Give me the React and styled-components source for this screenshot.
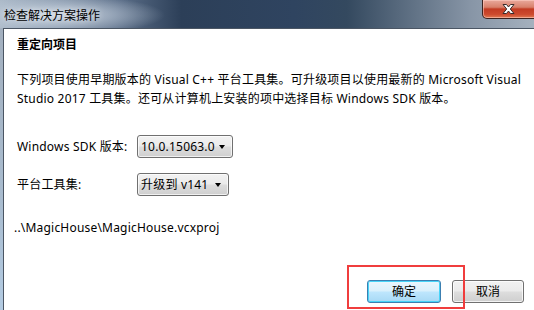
import React from 'react';
import styled, { createGlobalStyle } from 'styled-components';

const GlobalStyle = createGlobalStyle`
  html, body {
    margin: 0;
    padding: 0;
    overflow: hidden;
  }
`

const FONT = `"Noto Sans", "Noto Sans CJK SC", sans-serif`

const Window = styled.div`
  position: relative;
  width: 534px;
  height: 310px;
  display: flex;
  flex-direction: column;
  font-family: ${FONT};
  font-size: 12px;
  color: #000;
  background: linear-gradient(90deg, #aebccb 0%, #8f9fb1 30%, #7f90a4 100%);
`

const TitleBar = styled.div`
  height: 28px;
  flex: none;
  position: relative;
  display: flex;
  align-items: flex-start;
  background:
    radial-gradient(ellipse 110px 20px at 55px 15px, rgba(214,222,232,0.9) 0%, rgba(190,202,216,0.6) 50%, rgba(190,202,216,0) 100%),
    linear-gradient(90deg, #aab8c7 0%, #5d708a 22%, #2c3f58 34%, #2f4460 55%, #34495f 65%, #8795a6 88%, #a5b1be 100%);
`

const Title = styled.div`
  padding: 8px 0 0 4px;
  font-size: 12px;
  line-height: 16px;
  color: #000;
  text-shadow: 0 0 6px rgba(255,255,255,0.7);
`

const CloseButton = styled.div`
  position: absolute;
  right: -6px;
  top: 0;
  width: 58px;
  height: 19px;
  border: 1px solid #3b2320;
  border-top: none;
  border-bottom-left-radius: 5px;
  background: linear-gradient(180deg, #e9a99c 0%, #d8806b 40%, #c23b23 50%, #cd4a2e 80%, #e07a52 100%);
  box-shadow: inset 0 0 0 1px rgba(255,210,200,0.55);
  display: flex;
  align-items: center;
  justify-content: center;
  padding-right: 6px;
  box-sizing: border-box;
`

const Body = styled.div`
  flex: 1;
  display: flex;
  min-height: 0;
`

const SideFrame = styled.div`
  width: 3px;
  flex: none;
  background: linear-gradient(180deg, #a3b0bf 0%, #a9bccf 60%, #b3cbe2 100%);
`

const Client = styled.div`
  flex: 1;
  background: #fff;
  border-left: 1px solid #4b5664;
  border-top: 1px solid #4b5664;
  display: flex;
  flex-direction: column;
  padding: 8px 0 0 13px;
  letter-spacing: 0.2px;
`

const Heading = styled.div`
  font-weight: bold;
  line-height: 16px;
  letter-spacing: 0;
`

const Paragraph = styled.div`
  margin-top: 17px;
  line-height: 19px;
  white-space: nowrap;
`

const Line = styled.div``

const Form = styled.div`
  margin-top: 27px;
  display: grid;
  grid-template-columns: 120px auto;
  row-gap: 15px;
  align-items: center;
  justify-items: start;
`

const Label = styled.div`
  line-height: 16px;
`

const Select = styled.div`
  box-sizing: border-box;
  width: ${p => p.$width}px;
  height: 23px;
  border: 1px solid #707070;
  border-radius: 3px;
  background: linear-gradient(180deg, #f2f2f2 0%, #ebebeb 48%, #dddddd 52%, #cfcfcf 100%);
  box-shadow: inset 0 0 0 1px rgba(255,255,255,0.7);
  display: flex;
  align-items: center;
  justify-content: space-between;
  padding: 0 7px 0 3px;
  line-height: 16px;
  font-size: 12px;
  white-space: nowrap;
`

const Arrow = styled.span`
  width: 0;
  height: 0;
  flex: none;
  border-left: 3.5px solid transparent;
  border-right: 3.5px solid transparent;
  border-top: 4px solid #000;
  margin-top: 1px;
`

const PathText = styled.div`
  margin-top: 24px;
  margin-left: -3px;
  line-height: 16px;
`

const ButtonRow = styled.div`
  margin-top: 44px;
  display: flex;
  justify-content: flex-end;
  gap: 11px;
  padding-right: 10px;
`

const Button = styled.div`
  box-sizing: border-box;
  width: ${p => p.$width}px;
  height: 23px;
  border-radius: 3px;
  display: flex;
  align-items: center;
  justify-content: center;
  line-height: 16px;
  letter-spacing: 0;
  border: 1px solid ${p => (p.$default ? '#3c7fb1' : '#707070')};
  background: ${p => (p.$default
    ? 'linear-gradient(180deg, #eaf6fd 0%, #d9f0fc 48%, #bee6fd 52%, #a7d9f5 100%)'
    : 'linear-gradient(180deg, #f2f2f2 0%, #ebebeb 48%, #dddddd 52%, #cfcfcf 100%)')};
  box-shadow: ${p => (p.$default
    ? 'inset 0 0 0 1px #48d4f8'
    : 'inset 0 0 0 1px rgba(255,255,255,0.75)')};
`

const Highlight = styled.div`
  position: absolute;
  left: 347px;
  top: 265px;
  width: 118px;
  height: 44px;
  box-sizing: border-box;
  border: 2px solid #f03d3d;
  pointer-events: none;
`

function CloseIcon() {
  return (
    <svg width="15" height="12" viewBox="0 0 15 12">
      <path
        d="M2 1.5 L5.5 1.5 L7.5 4 L9.5 1.5 L13 1.5 L9.3 6 L13 10.5 L9.5 10.5 L7.5 8 L5.5 10.5 L2 10.5 L5.7 6 Z"
        fill="#fff"
        stroke="#3a2b2a"
        strokeWidth="1"
        strokeLinejoin="round"
      />
    </svg>
  )
}

export default function App() {
  return (
    <Window>
      <GlobalStyle />
      <TitleBar>
        <Title>检查解决方案操作</Title>
        <CloseButton>
          <CloseIcon />
        </CloseButton>
      </TitleBar>
      <Body>
        <SideFrame />
        <Client>
          <Heading>重定向项目</Heading>
          <Paragraph>
            <Line>下列项目使用早期版本的 Visual C++ 平台工具集。可升级项目以使用最新的 Microsoft Visual</Line>
            <Line>Studio 2017 工具集。还可从计算机上安装的项中选择目标 Windows SDK 版本。</Line>
          </Paragraph>
          <Form>
            <Label>Windows SDK 版本:</Label>
            <Select $width={96}>
              <span>10.0.15063.0</span>
              <Arrow />
            </Select>
            <Label>平台工具集:</Label>
            <Select $width={92}>
              <span>升级到 v141</span>
              <Arrow />
            </Select>
          </Form>
          <PathText>..\MagicHouse\MagicHouse.vcxproj</PathText>
          <ButtonRow>
            <Button $width={74} $default>确定</Button>
            <Button $width={72}>取消</Button>
          </ButtonRow>
        </Client>
      </Body>
      <Highlight />
    </Window>
  )
}
